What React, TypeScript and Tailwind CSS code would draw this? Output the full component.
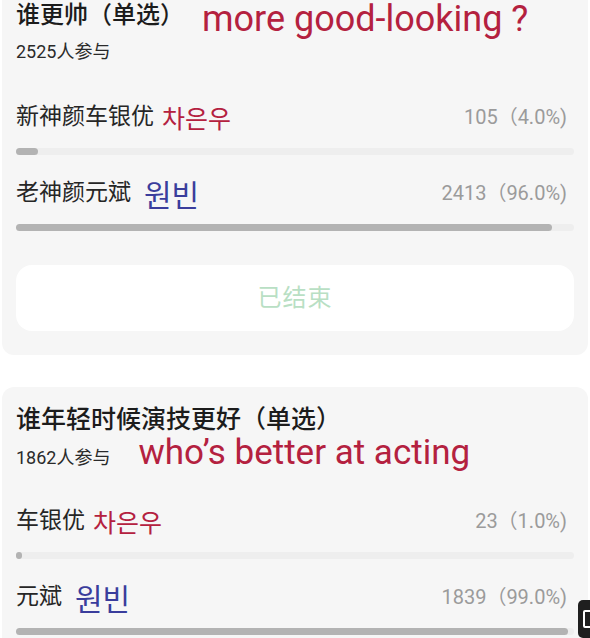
const font = { fontFamily: 'Roboto, "Noto Sans CJK SC", sans-serif' };

type Option = {
  name: string;
  ko: string;
  koColor: "red" | "blue";
  count: string;
  pct: number;
};

function OptionRow({ o }: { o: Option }) {
  return (
    <div>
      <div className="flex h-[30px] items-center justify-between">
        <div className="flex items-center">
          <span className="text-[23px] leading-[30px] text-[#262626]">{o.name}</span>
          {o.koColor === "red" ? (
            <span className="ml-[8px] text-[25px] leading-[30px] text-[#b4213f] [font-family:'Noto_Sans_CJK_KR',sans-serif]">
              {o.ko}
            </span>
          ) : (
            <span className="ml-[13px] text-[30px] leading-[30px] text-[#3a3d9c] [font-family:'Noto_Sans_CJK_KR',sans-serif]">
              {o.ko}
            </span>
          )}
        </div>
        <span className="pr-[7px] text-[20px] leading-[30px] text-[#9b9b9b]">{o.count}</span>
      </div>
      <div className="mt-[16px] h-[7px] w-full rounded-full bg-[#eeeeee]">
        <div className="h-full rounded-full bg-[#b3b3b3]" style={{ width: `${Math.max(o.pct, 0.6)}%` }} />
      </div>
    </div>
  );
}

const poll1: Option[] = [
  { name: "新神颜车银优", ko: "차은우", koColor: "red", count: "105（4.0%)", pct: 4 },
  { name: "老神颜元斌", ko: "원빈", koColor: "blue", count: "2413（96.0%)", pct: 96 },
];

const poll2: Option[] = [
  { name: "车银优", ko: "차은우", koColor: "red", count: "23（1.0%)", pct: 1 },
  { name: "元斌", ko: "원빈", koColor: "blue", count: "1839（99.0%)", pct: 99 },
];

export default function App() {
  return (
    <div className="relative h-[638px] w-[590px] overflow-hidden bg-white" style={font}>
      {/* card 1, top cut off */}
      <div className="mx-[2px] rounded-b-xl bg-[#f6f6f6] px-[14px] pt-[2px] pb-[24px]">
        <div className="flex h-[36px] items-start">
          <span className="text-[24px] font-medium leading-[26px] text-[#1c1c1c]">谁更帅（单选）</span>
          <span className="ml-[18px] text-[36px] leading-[34px] text-[#b4213f]">more good-looking ?</span>
        </div>
        <div className="mt-[4px] text-[18px] leading-[20px] text-[#2a2a2a]">2525人参与</div>
        <div className="mt-[40px] flex flex-col gap-[23px]">
          {poll1.map((o) => (
            <OptionRow key={o.name} o={o} />
          ))}
        </div>
        <div className="mt-[34px] flex h-[66px] items-center justify-center rounded-2xl bg-white">
          <span className="text-[24px] tracking-[1px] text-[#b9dfc4]">已结束</span>
        </div>
      </div>

      {/* card 2 */}
      <div className="mx-[2px] mt-[32px] rounded-xl bg-[#f6f6f6] px-[14px] pt-[18px] pb-[24px]">
        <div className="text-[25px] font-medium leading-[30px] text-[#1c1c1c]">谁年轻时候演技更好（单选）</div>
        <div className="-mt-[2px] flex h-[40px] items-baseline">
          <span className="text-[18px] leading-[20px] text-[#2a2a2a]">1862人参与</span>
          <span className="ml-[28px] text-[35px] leading-[40px] text-[#b4213f]">who’s better at acting</span>
        </div>
        <div className="mt-[33px] flex flex-col gap-[23px]">
          {poll2.map((o) => (
            <OptionRow key={o.name} o={o} />
          ))}
        </div>
      </div>

      {/* floating copy button overlay */}
      <div className="absolute right-[-8px] top-[600px] flex h-[38px] w-[20px] items-center justify-center rounded-[5px] bg-[#1f1f1f]">
        <div className="h-[18px] w-[10px] rounded-[2px] border-2 border-white" />
      </div>
    </div>
  );
}
